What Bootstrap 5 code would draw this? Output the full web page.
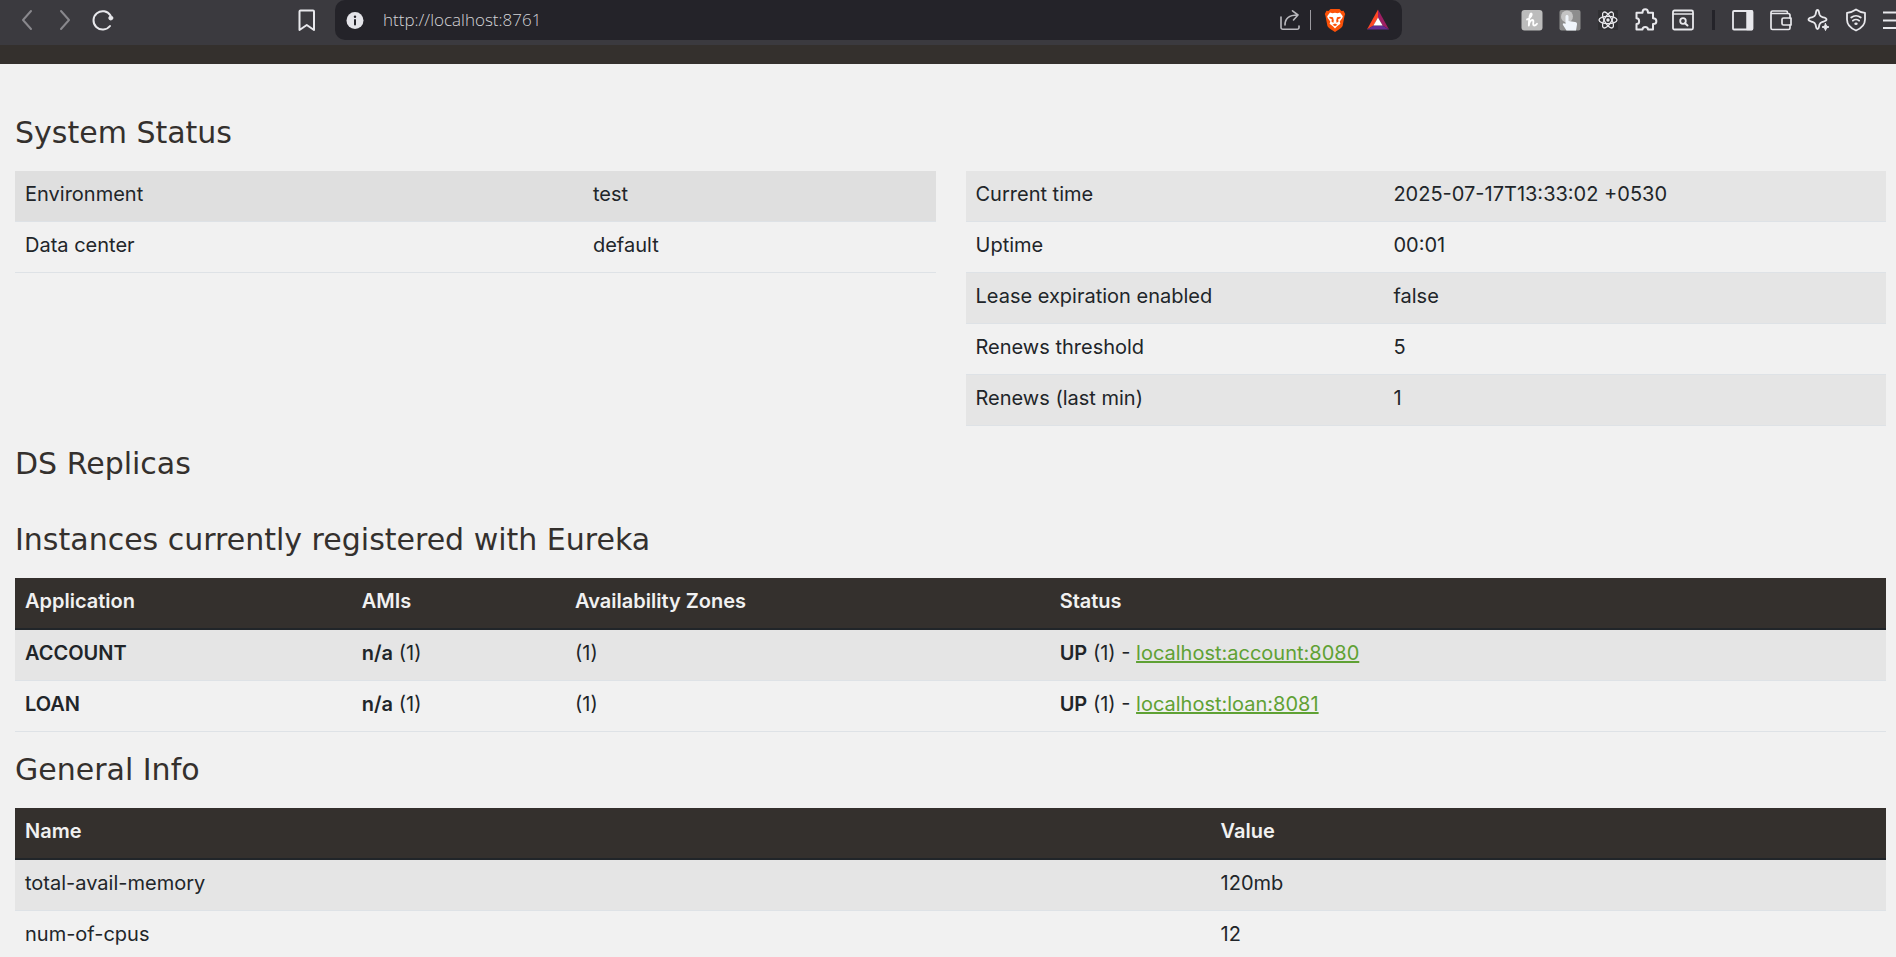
<!DOCTYPE html>
<html lang="en">
<head>
<meta charset="utf-8">
<meta name="viewport" content="width=device-width, initial-scale=1">
<title>Eureka</title>
<link href="https://cdn.jsdelivr.net/npm/bootstrap@5.3.0/dist/css/bootstrap.min.css" rel="stylesheet">
<style>
  body { background: #f1f1f1; color: #212529; font: 20px/30px Inter, "Open Sans", sans-serif; }
  h1 { font: 400 30px/36px "DejaVu Sans", Inter, sans-serif; color: #34302d; margin: 20px 0; }

  /* browser toolbar */
  .toolbar { background: #3b3a3f; height: 45px; color: #e8e8ec; }
  .toolbar svg { width: 24px; height: 24px; display: block; fill: none; stroke: currentColor; stroke-width: 2; stroke-linecap: round; stroke-linejoin: round; }
  .tool-btn { border: 0; padding: 0; background: none; color: inherit; flex: none; }
  .tool-btn:disabled { color: #89888d; }
  .tool-btn.rewards { margin-left: 19px; }
  .nav-tools { flex: 0 0 335px; height: 40px; gap: 14px; padding: 0 16px 0 15px; }
  .address { background: #242329; height: 40px; border-radius: 10px; padding: 0 12px 0 8px; }
  .address input { border: 0; outline: 0; background: none; color: #d4d4d8; font: 300 17px/24px "Open Sans", sans-serif; padding: 0; margin-left: 16px; }
  .thin-rule { width: 1px; height: 20px; background: #9b9a9f; margin: 0 12px 0 8px; }
  .thick-rule { flex: none; width: 3px; height: 20px; background: #242329; margin: 0 2px; }
  .ext-tools { flex: 0 0 494px; height: 40px; gap: 14px; padding-left: 118px; }
  .brand-strip { background: #34302d; height: 19px; flex: none; }

  /* dashboard */
  .dashboard { padding: 31px 10px 0 15px; }
  .status-row { --bs-gutter-x: 30px; }
  .info-table { table-layout: fixed; margin: 0; --bs-table-bg: transparent; --bs-table-color: #212529; border-color: #dee2e6; }
  .info-table > :not(caption) > * > * { padding: 8px 10px 12px; box-shadow: none; }
  .info-table > tbody > tr:nth-of-type(odd) > * { background: #e5e5e5; }
  .info-table > tbody > tr.pointed > * { background: #dfdfdf; }
  .info-table > thead > tr > th { background: #34302d; color: #f1f1f1; border-bottom: 2px solid #212529; font-weight: 600; }
  .info-table b { font-weight: 600; }
  .info-table a { color: #5fa134; }
</style>
</head>
<body>
<div class="vh-100 d-flex flex-column overflow-hidden">
  <header class="toolbar d-flex align-items-start flex-shrink-0 overflow-hidden">
    <div class="nav-tools d-flex align-items-center">
      <button class="tool-btn" disabled aria-label="Back"><svg viewBox="0 0 24 24"><path d="M16 3 8 12l8 9"/></svg></button>
      <button class="tool-btn" disabled aria-label="Forward"><svg viewBox="0 0 24 24"><path d="m8 3 8 9-8 9"/></svg></button>
      <button class="tool-btn" aria-label="Reload"><svg viewBox="0 0 24 24"><path d="M19 18A9.200 9.200 0 1 1 19.500 7.500"/><circle cx="19.800" cy="10" r="2" fill="currentColor" stroke-width="1"/></svg></button>
      <button class="tool-btn ms-auto" aria-label="Bookmark"><svg viewBox="0 0 24 24"><path d="M4.500 3.500a1 1 0 0 1 1-1h12.500a1 1 0 0 1 1 1V22l-7.250-5L4.500 22z"/></svg></button>
    </div>
    <div class="address d-flex align-items-center flex-grow-1">
      <svg viewBox="0 0 24 24"><circle cx="12" cy="12.500" r="8.500" fill="#e4e4e9" stroke="none"/><path d="M12 12v4.500" stroke="#242329"/><circle cx="12" cy="8.800" r="1.200" fill="#242329" stroke="none"/></svg>
      <input class="flex-grow-1" type="text" aria-label="Address" value="http://localhost:8761">
      <button class="tool-btn" aria-label="Share"><svg viewBox="0 0 24 24" color="#b9b8bd"><path d="M3 9v10.500a1.800 1.800 0 0 0 1.800 1.800h14.400a1.800 1.800 0 0 0 1.800-1.800V18M7 17C7 10.500 11 7 19.500 7M14.500 2.800 20 7l-4.500 5" stroke-width="1.600"/></svg></button>
      <span class="thin-rule"></span>
      <button class="tool-btn" aria-label="Brave Shields"><svg viewBox="0 0 24 24"><g stroke="none"><path fill="#fb5108" d="m7.500 1-2 2-2-.2L1.800 6l.7 2 1.800 9.500c.4 1.500 1.400 2.400 2.700 3.300L12 24l5-3.200c1.300-.9 2.300-1.800 2.700-3.300L21.500 8l.7-2-1.700-3.200-2 .2-2-2z"/><path fill="#fff" d="m7 4.500 2.500.7L12 4.800l2.500.4 2.500-.7 2.800 3.700-.5 1.800-2.600 3.500.7 2.300-2 1.500-1.300 1L12 20.500l-2.100-2.200-1.300-1-2-1.500.7-2.300L4.700 10l-.5-1.800z"/><path fill="#fb5108" d="m6.500 8.700 3.500.6.800 3.200-.5 2.500-2-1.700.7-1.900-2.700-1.400zM17.500 8.700l-3.500.6-.8 3.200.5 2.500 2-1.700-.7-1.900 2.700-1.400zM9.500 16.700l2.500-1.200 2.500 1.200L12 18.200z"/></g></svg></button>
      <button class="tool-btn rewards" aria-label="Brave Rewards"><svg viewBox="0 0 24 24"><g stroke="none"><path fill="#ff4724" d="M12 1.500 1 21.500l6.500-4L12 9.500z"/><path fill="#9e1f63" d="m12 1.500 11 20-6.500-4L12 9.500z"/><path fill="#662d91" d="M1 21.500h22l-6.500-4h-9z"/><path fill="#fff" d="m12 9.500-4.600 8h9.200z"/></g></svg></button>
    </div>
    <div class="ext-tools d-flex align-items-center overflow-hidden">
      <button class="tool-btn" aria-label="Honey"><svg viewBox="0 0 24 24"><rect x="1.500" y="2" width="21" height="20.500" rx="3" fill="#bcbcbc" stroke="none"/><path stroke="#fff" stroke-width="1.800" d="M7 11.500c3.500-.5 6-6 4-6-1.700 0-2 5-2.200 12 .5-3.500 2-5.500 3.700-5.500 2.300 0-.8 5.500 1.700 5.500 1.200 0 2-.7 2.800-1.800"/></svg></button>
      <button class="tool-btn" aria-label="Click recorder"><svg viewBox="0 0 24 24"><g stroke="none"><rect x="1.500" y="2" width="21" height="20.500" rx="2" fill="#8d8d8d"/><circle cx="9" cy="8.500" r="6" fill="#c4c4c4"/><path fill="#f0f5fb" d="M7.500 8.500c0-2 3-2 3 0v4.500l6.500 1c1.500.3 2.200 1 2 2.500l-1 6H8.500L5 17c-.8-1.400.7-2.500 2.500-1z"/></g></svg></button>
      <button class="tool-btn" aria-label="React Developer Tools"><svg viewBox="0 0 24 24"><rect x="2" y="2" width="20" height="20" fill="#303033" stroke="none"/><g stroke-width="1.300"><ellipse cx="12" cy="12" rx="9" ry="3.600"/><ellipse cx="12" cy="12" rx="9" ry="3.600" transform="rotate(60 12 12)"/><ellipse cx="12" cy="12" rx="9" ry="3.600" transform="rotate(120 12 12)"/></g><circle cx="12" cy="12" r="1.700" fill="currentColor" stroke="none"/></svg></button>
      <button class="tool-btn" aria-label="Extensions"><svg viewBox="0 0 24 24"><path d="M2.500 4.800h6c0-4.600 5.500-4.600 5.500 0h5v5.500c4.500 0 4.500 5.700 0 5.700v5.500h-5c0-3.500-5.500-3.500-5.500 0h-6V16c3.500 0 3.500-5.700 0-5.700z"/></svg></button>
      <button class="tool-btn" aria-label="Search tabs"><svg viewBox="0 0 24 24"><rect x="1" y="2.500" width="20" height="19" rx="1.500" stroke-width="1.800"/><path d="M1 6h20" stroke-width="1.500"/><circle cx="11" cy="13" r="2.800" stroke-width="1.800"/><path d="m13 15.200 2.500 2.300"/></svg></button>
      <span class="thick-rule"></span>
      <button class="tool-btn" aria-label="Sidebar"><svg viewBox="0 0 24 24"><rect x="2" y="3" width="19.500" height="18.500" rx="1" stroke-width="1.800"/><path d="M16 3h5v18.500h-5z" fill="currentColor" stroke-width="1.500"/></svg></button>
      <button class="tool-btn" aria-label="Wallet"><svg viewBox="0 0 24 24"><g stroke-width="1.700"><path d="M21 10V7.500a2 2 0 0 0-2-2H2V20a1.500 1.500 0 0 0 1.500 1.500h16A1.500 1.500 0 0 0 21 20v-3M2 5.500V4.500A1.500 1.500 0 0 1 3.500 3H17a1.500 1.500 0 0 1 1.500 1.500v1"/><path d="M22 10h-7.500a1.500 1.500 0 0 0-1.500 1.500v4a1.500 1.500 0 0 0 1.500 1.500H22z"/></g></svg></button>
      <button class="tool-btn" aria-label="Leo AI"><svg viewBox="0 0 24 24"><path stroke-width="1.800" d="M10.500 2c1.500 0 1.300 2 2 4.500.5 1.500 1.500 2.200 3 2.700 2 .6 4 .8 4 2.300s-2 1.700-4 2.300c-1.500.5-2.500 1.200-3 2.700-.7 2.500-.5 4.500-2 4.500s-1.300-2-2-4.500c-.5-1.500-1.500-2.200-3-2.700-2-.6-4-.8-4-2.300s2-1.700 4-2.300c1.500-.5 2.500-1.200 3-2.700.7-2.500.5-4.500 2-4.500z"/><path fill="currentColor" stroke-width="1" d="m18.500 15.500 1 2.500 2.500 1-2.500 1-1 2.500-1-2.500-2.500-1 2.500-1z"/></svg></button>
      <button class="tool-btn" aria-label="VPN"><svg viewBox="0 0 24 24"><path stroke-width="1.800" d="M11 1.500c2.800 2 5.800 3 9 3.300v6.700c0 5-3.500 8.700-9 11-5.500-2.300-9-6-9-11V4.800c3.200-.3 6.200-1.300 9-3.300z"/><path stroke-width="1.700" d="M6.200 9.500c2.800-2.300 6.800-2.300 9.600 0M7.800 12.700c2-1.500 4.400-1.500 6.400 0"/><ellipse cx="11" cy="15.800" rx="1.700" ry="1.300" fill="currentColor" stroke="none"/></svg></button>
      <button class="tool-btn" aria-label="Menu"><svg viewBox="0 0 24 24"><path stroke-linecap="butt" d="M0 4.500h24M0 12.500h24M0 20h24"/></svg></button>
    </div>
  </header>
  <div class="brand-strip"></div>

  <main class="dashboard d-flex flex-column flex-grow-1 overflow-hidden">
    <h1>System Status</h1>
    <div class="row status-row">
      <div class="col-md-6">
        <table class="table info-table">
          <colgroup><col style="width:61.7%"><col></colgroup>
          <tbody>
            <tr class="pointed"><td>Environment</td><td>test</td></tr>
            <tr><td>Data center</td><td>default</td></tr>
          </tbody>
        </table>
      </div>
      <div class="col-md-6">
        <table class="table info-table">
          <colgroup><col style="width:45.4%"><col></colgroup>
          <tbody>
            <tr><td>Current time</td><td>2025-07-17T13:33:02 +0530</td></tr>
            <tr><td>Uptime</td><td>00:01</td></tr>
            <tr><td>Lease expiration enabled</td><td>false</td></tr>
            <tr><td>Renews threshold</td><td>5</td></tr>
            <tr><td>Renews (last min)</td><td>1</td></tr>
          </tbody>
        </table>
      </div>
    </div>

    <h1>DS Replicas</h1>

    <h1>Instances currently registered with Eureka</h1>
    <table class="table info-table">
      <colgroup><col style="width:18%"><col style="width:11.4%"><col style="width:25.9%"><col></colgroup>
      <thead><tr><th>Application</th><th>AMIs</th><th>Availability Zones</th><th>Status</th></tr></thead>
      <tbody>
        <tr><td><b>ACCOUNT</b></td><td><b>n/a</b> (1)</td><td>(1)</td><td><b>UP</b> (1) - <a href="#account">localhost:account:8080</a></td></tr>
        <tr><td><b>LOAN</b></td><td><b>n/a</b> (1)</td><td>(1)</td><td><b>UP</b> (1) - <a href="#loan">localhost:loan:8081</a></td></tr>
      </tbody>
    </table>

    <h1>General Info</h1>
    <table class="table info-table">
      <colgroup><col style="width:63.9%"><col></colgroup>
      <thead><tr><th>Name</th><th>Value</th></tr></thead>
      <tbody>
        <tr><td>total-avail-memory</td><td>120mb</td></tr>
        <tr><td>num-of-cpus</td><td>12</td></tr>
      </tbody>
    </table>
  </main>
</div>
<script src="https://cdn.jsdelivr.net/npm/bootstrap@5.3.0/dist/js/bootstrap.bundle.min.js"></script>
</body>
</html>
